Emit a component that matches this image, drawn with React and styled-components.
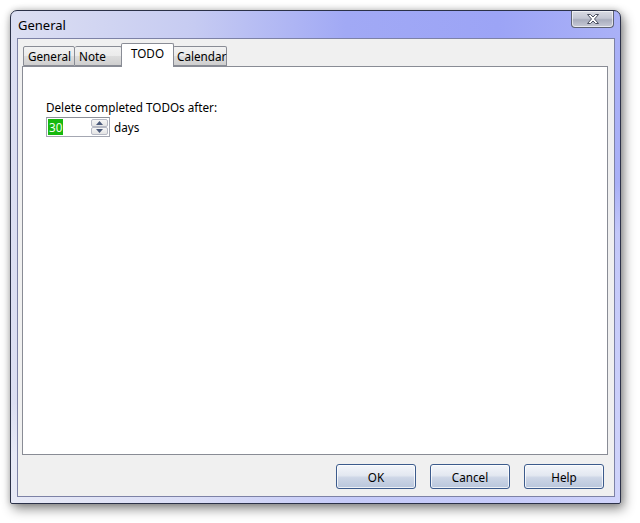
import React, { useState } from "react";
import styled, { createGlobalStyle } from "styled-components";

const GlobalStyle = createGlobalStyle`
  html, body {
    margin: 0;
    padding: 0;
    background: #ffffff;
  }
  body {
    font-family: "Noto Sans", "Open Sans", "DejaVu Sans", sans-serif;
    font-size: 11.7px;
    color: #000;
  }
`;

const Page = styled.div`
  width: 640px;
  height: 523px;
  box-sizing: border-box;
  padding: 10px 19px 19px 10px;
  overflow: hidden;
`;

const Window = styled.div`
  width: 611px;
  height: 494px;
  box-sizing: border-box;
  display: flex;
  flex-direction: column;
  padding: 0 5px 6px 6px;
  border: 1px solid #2b3148;
  border-radius: 7px 7px 2px 2px;
  background:
    linear-gradient(160deg, rgba(255,255,255,0) 55%, rgba(255,255,255,0.3) 62%, rgba(255,255,255,0.45) 100%),
    linear-gradient(90deg, #dcdff2 0%, #c6cbf2 30%, #a1a9f5 55%, #9ca4f6 80%, #aab1f7 100%);
  box-shadow: 3px 5px 12px rgba(0, 0, 0, 0.45), 0 0 6px rgba(0, 0, 0, 0.2);
`;

const TitleBar = styled.div`
  height: 27px;
  display: flex;
  align-items: flex-start;
  justify-content: space-between;
`;

const Title = styled.div`
  font-size: 13px;
  padding: 5px 0 0 1px;
  color: #000;
`;

const CloseButton = styled.div`
  width: 43px;
  height: 17px;
  margin-right: 1px;
  box-sizing: border-box;
  border: 1px solid #5d6273;
  border-top: none;
  border-radius: 0 0 4px 4px;
  background: linear-gradient(180deg, #d9dbe4 0%, #c3c6d3 45%, #a9adbd 55%, #c7cad6 100%);
  display: flex;
  align-items: center;
  justify-content: center;
  box-shadow: inset 0 0 0 1px rgba(255, 255, 255, 0.6);
`;

const Client = styled.div`
  flex: 1;
  display: flex;
  flex-direction: column;
  background: #f0f0f0;
  border: 1px solid #7d82a6;
  padding: 4px 6px 7px 4px;
  box-sizing: border-box;
`;

const TabStrip = styled.div`
  display: flex;
  align-items: flex-end;
  height: 23px;
  padding-left: 1px;
  position: relative;
  z-index: 1;
`;

const Tab = styled.div`
  box-sizing: border-box;
  height: ${({ $active }) => ($active ? "24px" : "20px")};
  margin-bottom: ${({ $active }) => ($active ? "-1px" : "0")};
  width: ${({ $w }) => $w}px;
  margin-left: ${({ $active }) => ($active ? "-1px" : "0")};
  margin-right: ${({ $active }) => ($active ? "-1px" : "0")};
  border: 1px solid #898c95;
  border-bottom: ${({ $active }) => ($active ? "none" : "1px solid #898c95")};
  border-left: ${({ $first, $active }) =>
    $first || $active ? "1px solid #898c95" : "none"};
  border-radius: 2px 2px 0 0;
  background: ${({ $active }) =>
    $active
      ? "#ffffff"
      : "linear-gradient(180deg, #f2f2f2 0%, #ebebeb 50%, #dddddd 51%, #cfcfcf 100%)"};
  display: flex;
  justify-content: ${({ $active }) => ($active ? "center" : "flex-start")};
  align-items: flex-start;
  padding: ${({ $active }) => ($active ? "2px 0 0 0" : "2px 0 0 4px")};
  font-size: 11.7px;
  line-height: 15px;
  white-space: nowrap;
  cursor: default;
  position: relative;
  z-index: ${({ $active }) => ($active ? 2 : 1)};
`;

const Panel = styled.div`
  height: 389px;
  box-sizing: border-box;
  border: 1px solid #898c95;
  background: #ffffff;
  padding: 33px 0 0 23px;
`;

const FieldLabel = styled.div`
  line-height: 15px;
  height: 17px;
`;

const SpinRow = styled.div`
  display: flex;
  align-items: center;
  gap: 4px;
`;

const SpinBox = styled.div`
  width: 64px;
  height: 20px;
  box-sizing: border-box;
  border: 1px solid #a4a7b2;
  border-top-color: #8d9099;
  display: flex;
  align-items: stretch;
  background: #fff;
  padding: 1px;
`;

const SpinValue = styled.div`
  flex: 1;
  display: flex;
  align-items: center;
`;

const Selected = styled.span`
  background: #16b80e;
  color: #f4fff0;
  line-height: 16px;
  padding: 0 1px;
`;

const SpinButtons = styled.div`
  width: 17px;
  display: flex;
  flex-direction: column;
`;

const SpinArrow = styled.div`
  flex: 1;
  box-sizing: border-box;
  border: 1px solid #b6b9c4;
  border-radius: 2px;
  background: linear-gradient(180deg, #f6f6f6 0%, #e4e4e4 100%);
  display: flex;
  align-items: center;
  justify-content: center;
`;

const Spacer = styled.div`
  flex: 1;
`;

const ButtonRow = styled.div`
  display: flex;
  justify-content: flex-end;
  gap: 14px;
  padding-right: 4px;
`;

const Button = styled.button`
  width: 80px;
  height: 25px;
  box-sizing: border-box;
  border: 1px solid #3c5b8c;
  border-radius: 3px;
  background: linear-gradient(180deg, #f4f6fa 0%, #e3e8f1 45%, #cdd6e6 55%, #b9c6dc 100%);
  box-shadow: inset 0 0 0 1px rgba(255, 255, 255, 0.75);
  font-family: "Noto Sans", "Open Sans", "DejaVu Sans", sans-serif;
  font-size: 11.7px;
  color: #000;
  padding: 0;
  cursor: default;
`;

const tabs = [
  { label: "General", w: 52 },
  { label: "Note", w: 47 },
  { label: "TODO", w: 53 },
  { label: "Calendar", w: 54 },
];

export default function App() {
  const [active, setActive] = useState("TODO");

  return (
    <>
      <GlobalStyle />
      <Page>
        <Window>
          <TitleBar>
            <Title>General</Title>
            <CloseButton>
              <svg width="16" height="12" viewBox="0 0 16 12">
                <path
                  d="M2.5 1.5 L5.5 1.5 L8 4 L10.5 1.5 L13.5 1.5 L9.5 6 L13.5 10.5 L10.5 10.5 L8 8 L5.5 10.5 L2.5 10.5 L6.5 6 Z"
                  fill="#ffffff"
                  stroke="#4a4f60"
                  strokeWidth="1"
                  strokeLinejoin="round"
                />
              </svg>
            </CloseButton>
          </TitleBar>
          <Client>
            <TabStrip>
              {tabs.map((t, i) => (
                <Tab
                  key={t.label}
                  $w={t.w}
                  $first={i === 0}
                  $active={active === t.label}
                  onClick={() => setActive(t.label)}
                >
                  {t.label}
                </Tab>
              ))}
            </TabStrip>
            <Panel>
              <FieldLabel>Delete completed TODOs after:</FieldLabel>
              <SpinRow>
                <SpinBox>
                  <SpinValue>
                    <Selected>30</Selected>
                  </SpinValue>
                  <SpinButtons>
                    <SpinArrow>
                      <svg width="7" height="4" viewBox="0 0 7 4">
                        <path d="M0 4 L3.5 0 L7 4 Z" fill="#4b5a7a" />
                      </svg>
                    </SpinArrow>
                    <SpinArrow>
                      <svg width="7" height="4" viewBox="0 0 7 4">
                        <path d="M0 0 L3.5 4 L7 0 Z" fill="#4b5a7a" />
                      </svg>
                    </SpinArrow>
                  </SpinButtons>
                </SpinBox>
                <span>days</span>
              </SpinRow>
            </Panel>
            <Spacer />
            <ButtonRow>
              <Button>OK</Button>
              <Button>Cancel</Button>
              <Button>Help</Button>
            </ButtonRow>
          </Client>
        </Window>
      </Page>
    </>
  );
}
